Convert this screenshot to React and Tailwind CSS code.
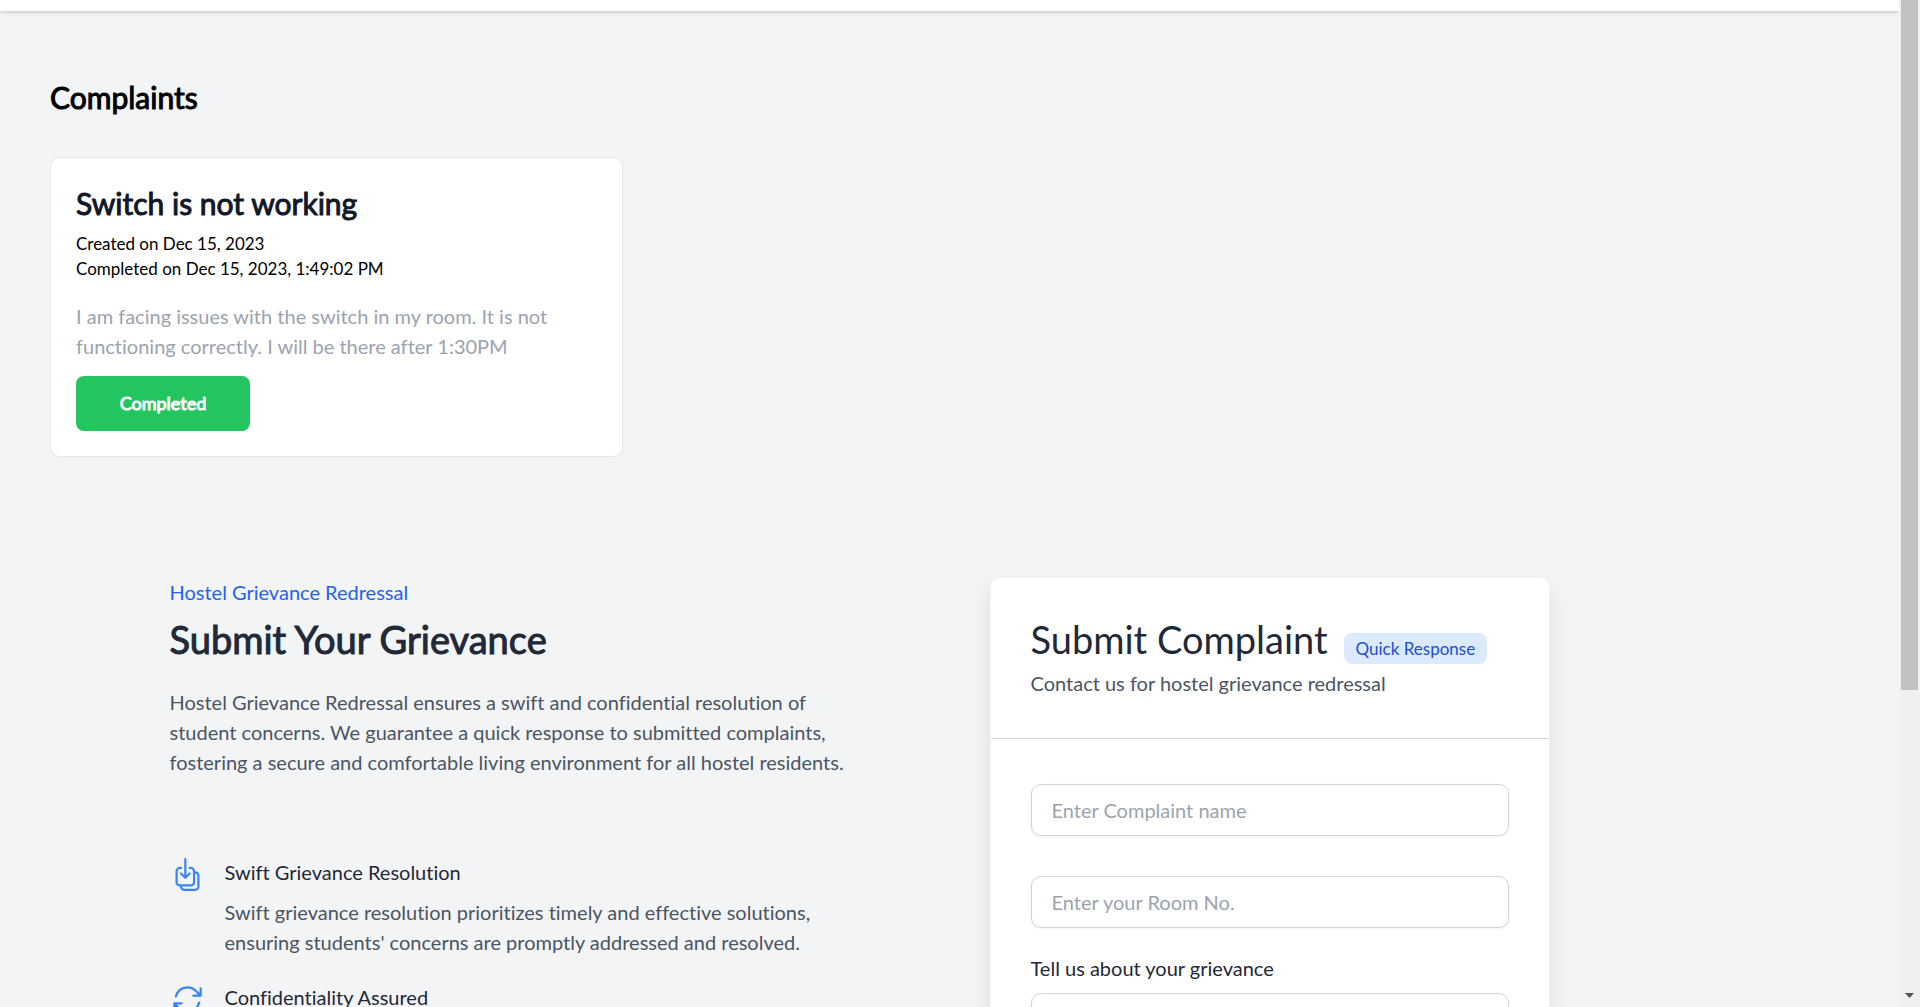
const complaints = [
  {
    name: "Switch is not working",
    created: "Created on Dec 15, 2023",
    completed: "Completed on Dec 15, 2023, 1:49:02 PM",
    description:
      "I am facing issues with the switch in my room. It is not functioning correctly. I will be there after 1:30PM",
    status: "Completed",
  },
];

const features = [
  {
    title: "Swift Grievance Resolution",
    text: "Swift grievance resolution prioritizes timely and effective solutions, ensuring students' concerns are promptly addressed and resolved.",
    path: "M7.5 7.5h-.75A2.25 2.25 0 0 0 4.5 9.75v7.5a2.25 2.25 0 0 0 2.25 2.25h7.5a2.25 2.25 0 0 0 2.25-2.25v-7.5a2.25 2.25 0 0 0-2.25-2.25h-.75m-6 3.75 3 3m0 0 3-3m-3 3V1.5m6 9h.75a2.25 2.25 0 0 1 2.25 2.25v7.5a2.25 2.25 0 0 1-2.25 2.25h-7.5a2.25 2.25 0 0 1-2.25-2.25v-.75",
  },
  {
    title: "Confidentiality Assured",
    text: "",
    path: "M16.023 9.348h4.992v-.001M2.985 19.644v-4.992m0 0h4.992m-4.993 0 3.181 3.183a8.25 8.25 0 0 0 13.803-3.7M4.031 9.865a8.25 8.25 0 0 1 13.803-3.7l3.181 3.182m0-4.991v4.99",
  },
];

const field =
  "block w-full rounded-[10px] border border-[#d1d5db] bg-white px-5 py-[10px] text-[20px] leading-[30px] text-[#1f2937] shadow-[0_1px_3px_rgba(0,0,0,0.06)] placeholder:text-[#9ca3af]";

function ComplaintCard({ complaint }) {
  return (
    <article className="rounded-[10px] border border-[#e5e7eb] bg-white p-[25px]">
      <h3 className="text-[30px] leading-[40px] text-[#111827] [-webkit-text-stroke:1px_#111827]">
        {complaint.name}
      </h3>
      <div className="mt-2 text-[17px] leading-[25px] text-black">
        <p>{complaint.created}</p>
        <p>{complaint.completed}</p>
      </div>
      <p className="mt-5 text-[20px] leading-[30px] text-[#9ca3af]">{complaint.description}</p>
      <button
        type="button"
        className="mt-[15px] w-[174px] rounded-lg bg-[#22c55e] py-[15px] text-[18px] leading-[25px] text-white [-webkit-text-stroke:1px_white]"
      >
        {complaint.status}
      </button>
    </article>
  );
}

function Feature({ feature }) {
  return (
    <li className="flex gap-5">
      <svg
        className="size-[35px] shrink-0 text-[#3b82f6]"
        viewBox="0 0 24 24"
        fill="none"
        stroke="currentColor"
        strokeWidth="1.5"
        strokeLinecap="round"
        strokeLinejoin="round"
        aria-hidden="true"
      >
        <path d={feature.path} />
      </svg>
      <div>
        <h3 className="text-[20px] leading-[30px] text-[#1f2937]">{feature.title}</h3>
        {feature.text && (
          <p className="mt-[10px] text-[20px] leading-[30px] text-[#4b5563]">{feature.text}</p>
        )}
      </div>
    </li>
  );
}

function Scrollbar() {
  return (
    <div className="flex w-[21px] shrink-0 flex-col items-center justify-between bg-[#f0f0f0]" aria-hidden="true">
      <div className="h-[690px] w-[17px] bg-[#c1c1c1]" />
      <svg className="mb-[9px] h-[5px] w-[9px]" viewBox="0 0 9 5">
        <path d="M0 0h9L4.500 5z" fill="#505050" />
      </svg>
    </div>
  );
}

export default function App() {
  return (
    <div className="flex h-screen overflow-hidden bg-[#f3f4f6] font-['Lato',sans-serif] [font-variant-ligatures:no-common-ligatures]">
      <div className="min-w-0 flex-1 overflow-hidden">
        <header className="h-[11px] bg-white shadow-[0_1px_4px_rgba(0,0,0,0.2)]" />
        <main>
          <section className="px-[50px] pt-[66px]">
            <h2 className="text-[30px] leading-[40px] text-black [-webkit-text-stroke:1px_black]">
              Complaints
            </h2>
            <div className="mt-10 grid grid-cols-3 gap-10">
              {complaints.map((complaint) => (
                <ComplaintCard key={complaint.name} complaint={complaint} />
              ))}
            </div>
          </section>

          <section className="mx-auto mt-[120px] grid max-w-[1600px] grid-cols-2 gap-20 px-5">
            <div className="max-w-[700px]">
              <p className="text-[20px] leading-[30px] text-[#2563eb]">Hostel Grievance Redressal</p>
              <h1 className="mt-[7px] text-[38px] leading-[50px] text-[#1f2937] [-webkit-text-stroke:1px_#1f2937]">
                Submit Your Grievance
              </h1>
              <p className="mt-[23px] text-[20px] leading-[30px] text-[#4b5563]">
                Hostel Grievance Redressal ensures a swift and confidential resolution of student
                concerns. We guarantee a quick response to submitted complaints, fostering a secure
                and comfortable living environment for all hostel residents.
              </p>
              <ul className="mt-20 flex flex-col gap-[25px]">
                {features.map((feature) => (
                  <Feature key={feature.title} feature={feature} />
                ))}
              </ul>
            </div>

            <form className="w-full max-w-[560px] rounded-[10px] border border-[#f3f4f6] bg-white shadow-[0_12px_20px_rgba(0,0,0,0.1)]">
              <div className="border-b border-[#d1d5db] px-10 pt-9 pb-10">
                <div className="flex items-end gap-4 whitespace-nowrap">
                  <h2 className="text-[38px] leading-[50px] text-[#1f2937]">Submit Complaint</h2>
                  <span className="rounded-lg bg-[#dbeafe] px-3 py-[3px] text-[17px] leading-[25px] text-[#1d4ed8]">
                    Quick Response
                  </span>
                </div>
                <p className="mt-1 text-[20px] leading-[30px] text-[#4b5563]">
                  Contact us for hostel grievance redressal
                </p>
              </div>
              <div className="flex flex-col gap-10 px-10 pt-[45px]">
                <input type="text" aria-label="Complaint name" placeholder="Enter Complaint name" className={field} />
                <input type="text" aria-label="Room number" placeholder="Enter your Room No." className={field} />
              </div>
              <div className="px-10 pt-[25px] pb-10">
                <label htmlFor="grievance" className="block text-[20px] leading-[30px] text-[#1f2937]">
                  Tell us about your grievance
                </label>
                <textarea id="grievance" rows="4" className={`mt-[10px] ${field}`} />
              </div>
            </form>
          </section>
        </main>
      </div>
      <Scrollbar />
    </div>
  );
}
